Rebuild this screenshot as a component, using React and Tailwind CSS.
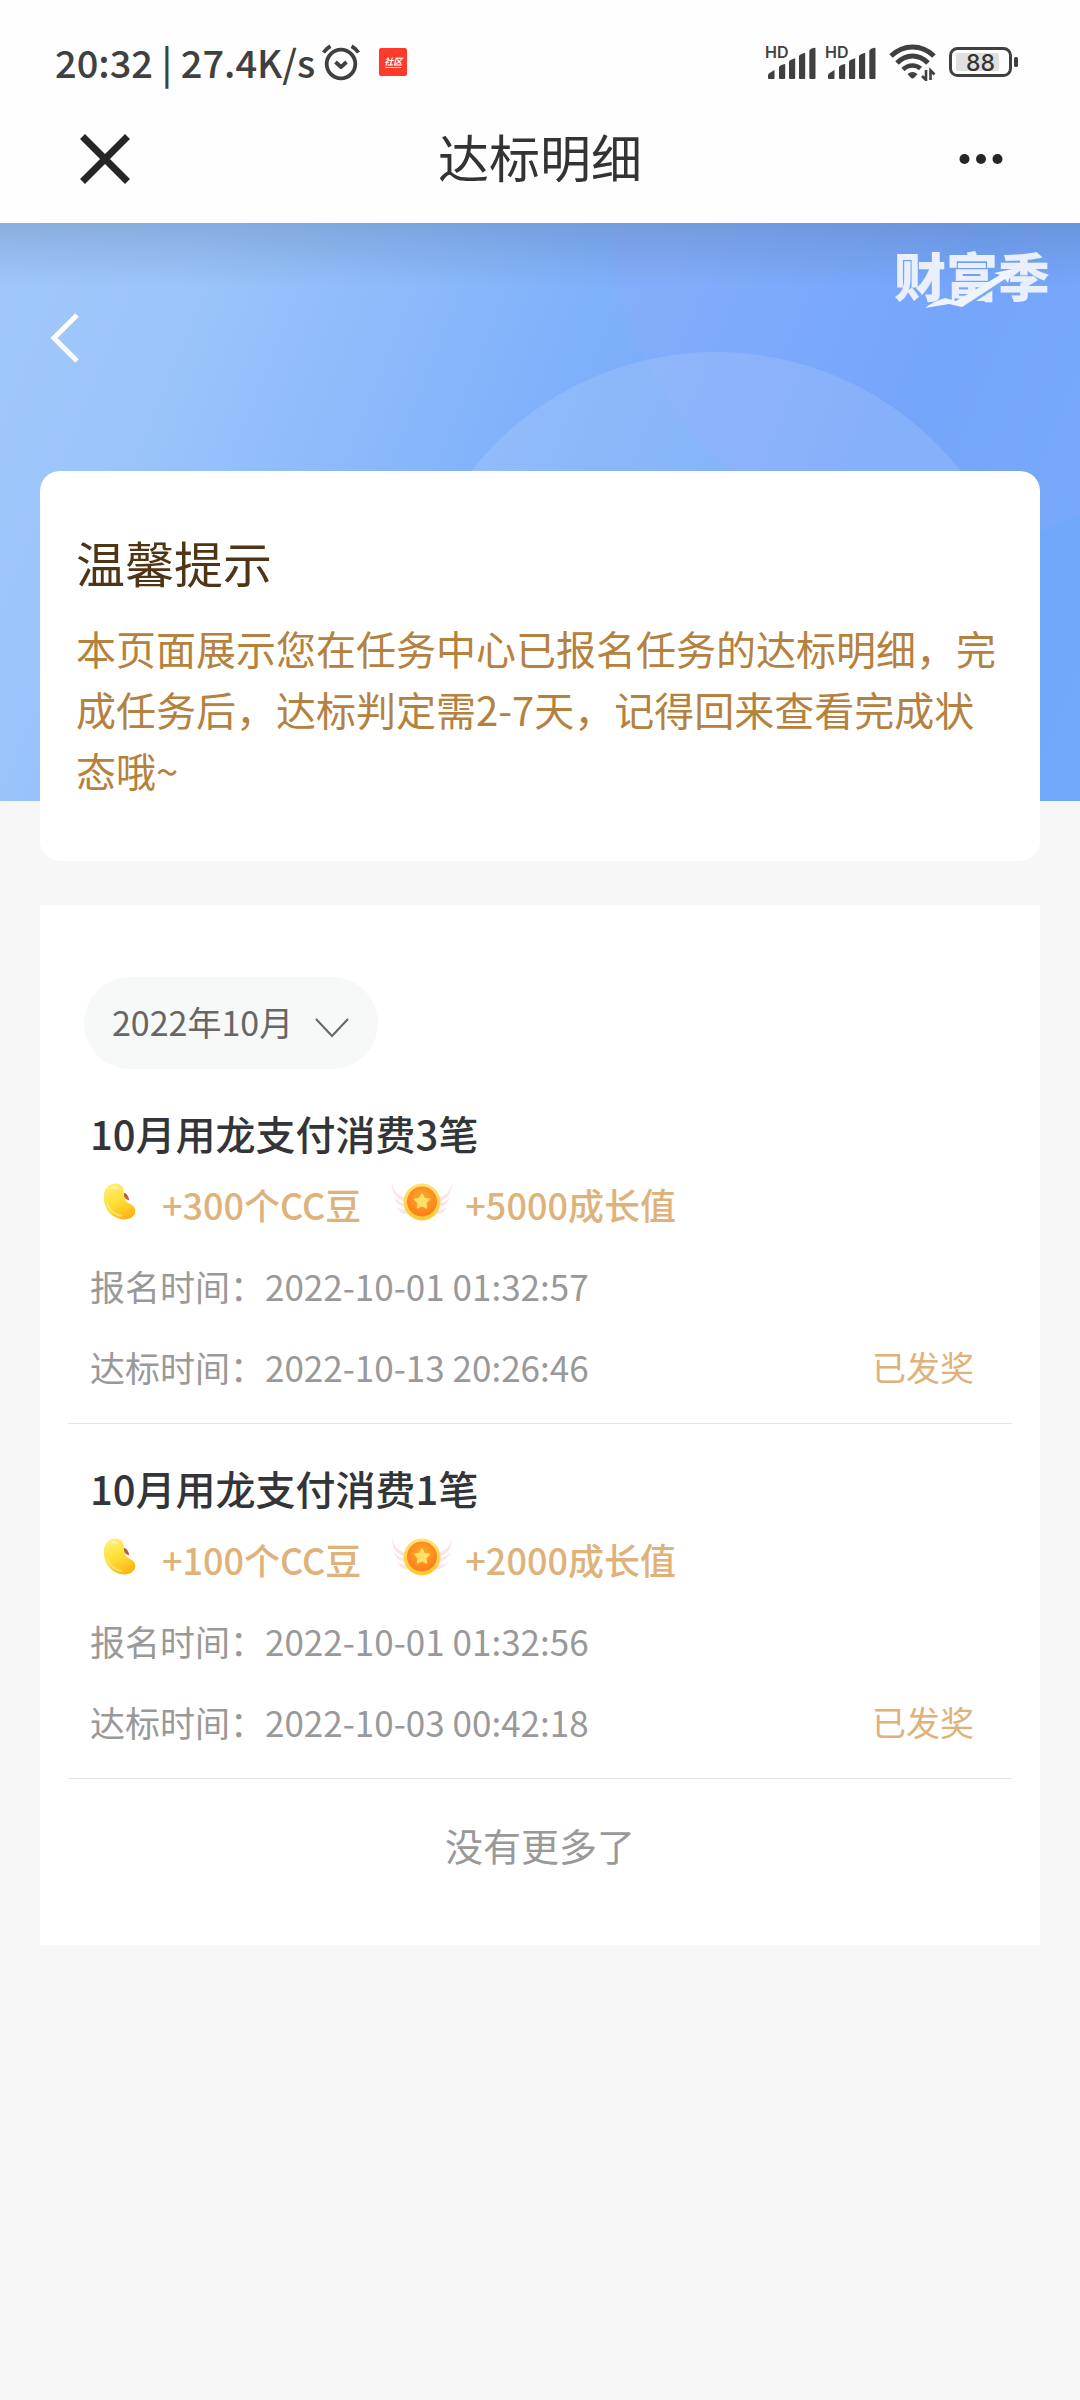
import React, { useState } from "react";

const RECORDS = [
  {
    id: 1,
    title: "10月用龙支付消费3笔",
    beans: "+300个CC豆",
    growth: "+5000成长值",
    signedAt: "2022-10-01 01:32:57",
    reachedAt: "2022-10-13 20:26:46",
    status: "已发奖",
  },
  {
    id: 2,
    title: "10月用龙支付消费1笔",
    beans: "+100个CC豆",
    growth: "+2000成长值",
    signedAt: "2022-10-01 01:32:56",
    reachedAt: "2022-10-03 00:42:18",
    status: "已发奖",
  },
];

const MONTHS = ["2022年10月", "2022年9月", "2022年8月"];

function AlarmIcon() {
  return (
    <svg width="40" height="38" viewBox="0 0 40 38" fill="none" stroke="#404040" strokeLinecap="round">
      <circle cx="20" cy="21" r="14.3" strokeWidth="3.8" />
      <path d="M14.5 19l5.5 5 5.5-5" strokeWidth="3.8" strokeLinejoin="round" strokeLinecap="butt" />
      <path d="M2.5 9.500q3-4.200 7-6.200M37.500 9.500q-3-4.200-7-6.200" strokeWidth="3.800" strokeLinecap="butt" />
    </svg>
  );
}

function SignalIcon() {
  return (
    <div className="relative">
      <span className="absolute -top-1 left-0 font-[Inter,sans-serif] text-[16px] leading-6 font-semibold text-[#404040]">
        HD
      </span>
      <svg width="52" height="36" viewBox="0 0 52 36" fill="#404040">
        <path d="M3 34v-3q0-1.500 6.500-5v8q0 1-1 1h-4.500q-1 0-1-1z" />
        <path d="M14 34V23q1-2 6.200-3v14q0 1-1 1H15q-1 0-1-1z" />
        <path d="M24 34V17.500q1-2 6.200-3.200V34q0 1-1 1H25q-1 0-1-1z" />
        <path d="M34 34V12q1-2 6.200-3.200V34q0 1-1 1H35q-1 0-1-1z" />
        <path d="M44.300 34V6.500q1-2 5-2.700 1.200 0 1.200 1.200v29q0 1-1 1h-4.200q-1 0-1-1z" />
      </svg>
    </div>
  );
}

function WifiIcon() {
  return (
    <svg width="48" height="38" viewBox="0 0 48 38" fill="none" stroke="#404040">
      <path d="M2 13q9.500-9 21.500-9T45 13" strokeWidth="5" />
      <path d="M8 20q7-7 15.500-7T39 20" strokeWidth="5" />
      <path d="M14 26.500q4-4 9.500-4 4.500 0 8 3" strokeWidth="4.600" />
      <path d="M18.500 31q5-4 10 0l-3 3.500q-2 1.800-4 0z" fill="#404040" stroke="none" />
      <path d="M37 27v10l-4-4M41.500 37V27.500l4 4" strokeWidth="2.600" />
    </svg>
  );
}

function BatteryIcon() {
  return (
    <svg width="70" height="32" viewBox="0 0 70 32">
      <rect x="1.500" y="2.500" width="60" height="27" rx="7" fill="none" stroke="#404040" strokeWidth="3" />
      <rect x="7" y="7" width="43" height="18" rx="2" fill="#e0e0e0" />
      <rect x="65" y="11" width="4" height="10" rx="1.500" fill="#404040" />
      <text x="31.500" y="24.500" textAnchor="middle" fontSize="23" fontWeight="500" fill="#333" fontFamily="Inter, sans-serif">
        88
      </text>
    </svg>
  );
}

function BeanIcon() {
  return (
    <svg width="36" height="40" viewBox="0 0 36 40">
      <defs>
        <linearGradient id="bean" x1="0.2" y1="0" x2="0.6" y2="1">
          <stop offset="0" stopColor="#fff07a" />
          <stop offset="0.55" stopColor="#fedd33" />
          <stop offset="1" stopColor="#fdb515" />
        </linearGradient>
      </defs>
      <path
        d="M13 1.500C5.500 2 1.500 8 1.800 16 2.200 28 11 37 22 37.500c6.500.2 11.500-3.500 11.300-8.500-.2-4-2.500-6-6-7.500-3-1.500-4.800-3.500-5-8C22.300 6 19.500 1.200 13 1.500z"
        fill="url(#bean)"
      />
      <path d="M8 6c4-2.500 8-1.500 9.500 1.500-2-1-6-1-9.500-1.500z" fill="#fffbd0" opacity="0.8" />
      <path d="M5 22c3 7 8 11 15 12" fill="none" stroke="#fff3a0" strokeWidth="2" opacity="0.5" />
      <path d="M22 11q3.500-.5 5.500 7.500-4.500-1-5.500-4.500z" fill="#b0643a" />
    </svg>
  );
}

function MedalIcon() {
  return (
    <svg width="62" height="42" viewBox="0 0 62 42">
      <defs>
        <radialGradient id="medal" cx="0.5" cy="0.4" r="0.6">
          <stop offset="0" stopColor="#ffad2e" />
          <stop offset="1" stopColor="#fb7c18" />
        </radialGradient>
        <linearGradient id="rim" x1="0" y1="0" x2="0" y2="1">
          <stop offset="0" stopColor="#ffe07a" />
          <stop offset="1" stopColor="#ffc930" />
        </linearGradient>
      </defs>
      <g fill="#fce4e6">
        <path d="M1 2q2 12 14 15l-1 4Q1 17 1 2zM3 16q4 6 12 6v4Q5 25 3 16zM6 26q4 4 10 2l2 5q-9 1-12-7z" />
        <path d="M61 2q-2 12-14 15l1 4Q61 17 61 2zM59 16q-4 6-12 6v4q10-1 12-10zM56 26q-4 4-10 2l-2 5q9 1 12-7z" />
      </g>
      <circle cx="31" cy="21" r="18.500" fill="url(#rim)" />
      <circle cx="31" cy="20.500" r="15" fill="url(#medal)" />
      <path
        d="M31 13l2.300 4.600 5 .7-3.600 3.600.8 5L31 24.600l-4.500 2.300.8-5-3.600-3.600 5-.7z"
        fill="#ffe066"
        stroke="#ffe066"
        strokeWidth="1.500"
        strokeLinejoin="round"
      />
    </svg>
  );
}

function StatusBar() {
  return (
    <div className="flex items-center justify-between pt-9 pl-[55px] pr-[61px]">
      <div className="flex h-[52px] items-center">
        <span className="text-[38px] leading-[50px] font-medium text-[#404040]">20:32 | 27.4K/s</span>
        <span className="ml-1.5">
          <AlarmIcon />
        </span>
        <span className="ml-[18px] flex h-7 w-7 flex-col items-center justify-center rounded-xs bg-[#fe3a2c] text-[9px] leading-[11px] font-bold text-white italic">
          社区
          <span className="h-px w-4 bg-white/80" />
        </span>
      </div>
      <div className="flex h-[52px] items-center">
        <SignalIcon />
        <span className="ml-2">
          <SignalIcon />
        </span>
        <span className="ml-3">
          <WifiIcon />
        </span>
        <span className="ml-3">
          <BatteryIcon />
        </span>
      </div>
    </div>
  );
}

function NavBar() {
  return (
    <header className="grid h-[135px] grid-cols-3 items-center px-[76px] pt-1.5">
      <button type="button" aria-label="关闭" className="justify-self-start">
        <svg width="58" height="58" viewBox="0 0 58 58" stroke="#262626" strokeWidth="7">
          <path d="M6.500 6.500l45 45M51.500 6.500l-45 45" />
        </svg>
      </button>
      <h1 className="justify-self-center pb-1.5 text-[51px] leading-[60px] whitespace-nowrap text-[#333]">达标明细</h1>
      <button type="button" aria-label="更多" className="justify-self-end">
        <svg width="46" height="20" viewBox="0 0 46 20" fill="#262626">
          <circle cx="6.500" cy="10" r="5" />
          <circle cx="23" cy="10" r="5" />
          <circle cx="39.500" cy="10" r="5" />
        </svg>
      </button>
    </header>
  );
}

function Hero() {
  return (
    <section className="relative flex h-[578px] items-start justify-between overflow-hidden bg-[linear-gradient(112deg,#a0c8fb_0%,#9cc5fb_15%,#7fb0fa_48%,#6ca5f9_75%,#72aafa_100%)]">
      {/* cercles décoratifs + ombre de la barre */}
      <svg
        className="absolute inset-0 h-full w-full"
        viewBox="0 0 1080 578"
        preserveAspectRatio="xMaxYMin slice"
        aria-hidden="true"
      >
        <circle cx="943" cy="-11" r="333" fill="#a5aaff" opacity="0.16" />
        <circle cx="716" cy="440" r="311" fill="#fff" opacity="0.12" />
      </svg>
      <div className="absolute inset-x-0 top-0 h-16 bg-linear-to-b from-[#46648c]/25 to-transparent" />
      <button type="button" aria-label="返回" className="relative mt-[86px] ml-[46px]">
        <svg width="38" height="58" viewBox="0 0 38 58" fill="none" stroke="#fff" strokeWidth="5">
          <path d="M31 6L8 29l23 23" />
        </svg>
      </button>
      <div className="relative mt-[22px] mr-[30px]">
        <span className="block text-[52px] leading-[60px] font-black text-[#e9effd]">财富季</span>
        <svg className="absolute top-5 left-7" width="100" height="44" viewBox="0 0 100 44" aria-hidden="true">
          <path d="M32 37l10 2 42-27" fill="none" stroke="#7ba9f4" strokeWidth="8" />
          <path d="M3 43q9-7 20-10l11 3 44-26-6-2 18-4-4 14-3-4-43 28-13-3z" fill="#eff4fe" />
        </svg>
      </div>
    </section>
  );
}

function RecordItem({ record }) {
  return (
    <li className="border-b border-[#e4e4e4] pt-[34px] pr-[38px] pb-4 pl-[22px]">
      <h3 className="text-[40px] leading-[60px] font-medium text-[#333538]">{record.title}</h3>
      <div className="mt-4 flex h-[50px] items-center text-[36px] leading-[50px] font-medium text-[#deb27a]">
        <span className="mb-1 ml-3">
          <BeanIcon />
        </span>
        <span className="ml-6">{record.beans}</span>
        <span className="mb-1 ml-[30px]">
          <MedalIcon />
        </span>
        <span className="ml-3">{record.growth}</span>
      </div>
      <div className="mt-4 text-[35px] leading-[81px] text-[#999]">
        <p>报名时间：{record.signedAt}</p>
        <div className="flex justify-between">
          <p>达标时间：{record.reachedAt}</p>
          <span className="text-[34px] text-[#deb27a]">{record.status}</span>
        </div>
      </div>
    </li>
  );
}

export default function App() {
  const [month, setMonth] = useState(MONTHS[0]);

  return (
    <div className="min-h-screen bg-[#f7f7f7] font-['Noto_Sans_CJK_SC',sans-serif]">
      <div className="bg-[#fefefe]">
        <StatusBar />
        <NavBar />
      </div>
      <Hero />

      <main className="relative mx-10 -mt-[330px]">
        <section className="rounded-[20px] bg-white px-9 pt-[61px] pb-[60px]">
          <h2 className="text-[49px] leading-[60px] text-[#4f3515]">温馨提示</h2>
          <p className="mt-[26px] text-[40px] leading-[61px] text-[#b5813e]">
            本页面展示您在任务中心已报名任务的达标明细，完成任务后，达标判定需2-7天，记得回来查看完成状态哦~
          </p>
        </section>

        <section className="mt-11 bg-white px-7 pt-[72px] pb-[70px]">
          <div className="relative ml-4 w-[294px]">
            <select
              aria-label="月份"
              value={month}
              onChange={(e) => setMonth(e.target.value)}
              className="h-[92px] w-full appearance-none rounded-full bg-[#f7f9f8] pb-1 pl-7 text-[34px] text-[#666]"
            >
              {MONTHS.map((m) => (
                <option key={m}>{m}</option>
              ))}
            </select>
            <svg
              className="pointer-events-none absolute top-10 right-7"
              width="36"
              height="22"
              viewBox="0 0 36 22"
              fill="none"
              stroke="#666"
              strokeWidth="2"
            >
              <path d="M2 2l16 17L34 2" />
            </svg>
          </div>
          <ul>
            {RECORDS.map((r) => (
              <RecordItem key={r.id} record={r} />
            ))}
          </ul>
          <p className="pt-9 text-center text-[38px] leading-[60px] text-[#999]">没有更多了</p>
        </section>
      </main>
    </div>
  );
}
